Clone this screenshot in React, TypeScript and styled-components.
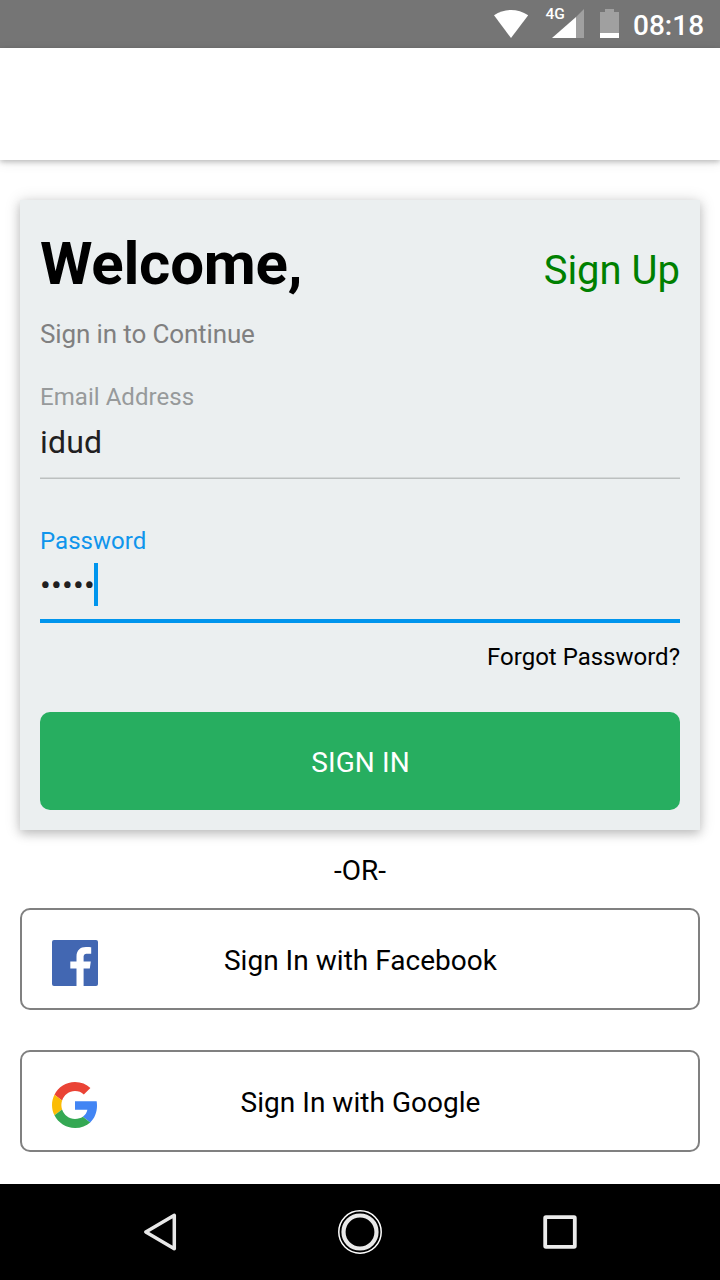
import React from 'react';
import styled, { createGlobalStyle } from 'styled-components';

const GlobalStyle = createGlobalStyle`
  * { box-sizing: border-box; }
  body {
    margin: 0;
    background: #fff;
    font-family: Roboto, 'Liberation Sans', sans-serif;
    color: #000;
  }
`;

const Screen = styled.div`
  display: flex;
  flex-direction: column;
  width: 720px;
  height: 1280px;
  overflow: hidden;
  background: #fff;
`;

const StatusBar = styled.header`
  display: flex;
  align-items: center;
  justify-content: flex-end;
  flex: none;
  height: 48px;
  padding-right: 16px;
  background: #757575;
  color: #fff;
`;

const StatusIcons = styled.svg`
  display: block;
  width: 140px;
  height: 48px;
`;

const Clock = styled.time`
  font-size: 28px;
  font-weight: 500;
  line-height: 34px;
  padding-top: 4px;
  width: 71px;
  white-space: nowrap;
`;

const AppBar = styled.div`
  flex: none;
  height: 112px;
  background: #fff;
  box-shadow: 0 2px 5px rgba(0, 0, 0, 0.22), 0 3px 12px rgba(0, 0, 0, 0.08);
`;

const Content = styled.main`
  display: flex;
  flex-direction: column;
  flex: 1;
  padding: 40px 20px 0;
`;

const Card = styled.form`
  display: flex;
  flex-direction: column;
  height: 630px;
  padding: 29px 20px 20px;
  background: #ebeff0;
  box-shadow: 0 4px 9px rgba(0, 0, 0, 0.17), 0 1px 15px rgba(0, 0, 0, 0.16);
`;

const CardHeader = styled.div`
  display: flex;
  align-items: baseline;
  justify-content: space-between;
  height: 70px;
`;

const Title = styled.h1`
  margin: 0;
  font-size: 60px;
  font-weight: 700;
  line-height: 70px;
  letter-spacing: -0.25px;
`;

const SignUpLink = styled.a`
  font-size: 40px;
  line-height: 48px;
  color: #008000;
`;

const Subtitle = styled.p`
  margin: 20px 0 34px;
  font-size: 26px;
  line-height: 30px;
  letter-spacing: -0.13px;
  color: #808080;
`;

const Field = styled.div<{ $focused?: boolean }>`
  display: flex;
  flex-direction: column;
  height: 96px;
  border-bottom: ${(p) => (p.$focused ? '4px solid #0095ed' : '1px solid #bcc0c0')};
  box-shadow: ${(p) => (p.$focused ? 'none' : 'inset 0 -1px 0 #d4d8d8')};
  & + & {
    margin-top: 48px;
  }
`;

const Label = styled.span<{ $focused?: boolean }>`
  font-size: 24px;
  line-height: 28px;
  letter-spacing: 0.05px;
  color: ${(p) => (p.$focused ? '#0f95ec' : '#979a9b')};
`;

const Value = styled.div`
  display: flex;
  align-items: center;
  height: 43px;
  margin-top: 8px;
  padding-top: 3px;
  font-size: 32px;
  line-height: 38px;
  letter-spacing: 0.15px;
  color: #1f2021;
`;

const PasswordValue = styled(Value)`
  padding-top: 0;
  letter-spacing: 0.22px;
`;

const Caret = styled.span`
  width: 4px;
  height: 43px;
  margin-left: -1px;
  background: #0095ed;
`;

const ForgotLink = styled.a`
  align-self: flex-end;
  margin-top: 20px;
  font-size: 24px;
  line-height: 28px;
`;

const SignInButton = styled.button`
  height: 98px;
  margin-top: auto;
  padding: 3px 0 0 1px;
  border: 0;
  border-radius: 10px;
  background: #27ae60;
  color: #fff;
  font: 400 28px Roboto, sans-serif;
  letter-spacing: 0.1px;
`;

const Divider = styled.p`
  margin: 25px 0 21px;
  font-size: 28px;
  line-height: 32px;
  text-align: center;
`;

const ProviderButton = styled.button`
  display: grid;
  grid-template-columns: 46px 1fr 46px;
  align-items: center;
  flex: none;
  height: 102px;
  padding: 0 30px;
  border: 2px solid #808080;
  border-radius: 10px;
  background: #fff;
  color: #000;
  font: 400 28px Roboto, sans-serif;
  & + & {
    margin-top: 40px;
  }
`;

const ProviderLabel = styled.span`
  padding: 2px 0 0 1px;
  letter-spacing: 0.03px;
`;

const ProviderLogo = styled.svg`
  display: block;
  width: 46px;
  height: 46px;
  margin-top: 8px;
`;

const NavBar = styled.nav`
  display: flex;
  align-items: center;
  justify-content: center;
  gap: 152px;
  flex: none;
  height: 96px;
  background: #000;
`;

const NavIcon = styled.svg`
  display: block;
  width: 48px;
  height: 48px;
`;

export default function App() {
  return (
    <>
      <GlobalStyle />
      <Screen>
        <StatusBar>
          <StatusIcons viewBox="493 0 140 48">
            <path d="M494 15.2C504.500 8.200 517.500 8.200 528.200 15.200L511 38Z" fill="#fff" />
            <path d="M584 9V38H576V17Z" fill="#a0a0a0" />
            <path d="M576 17V38H552Z" fill="#fff" />
            <text x="545.500" y="19.300" fontSize="15.500" fontWeight="500" fill="#fff">4G</text>
            <path d="M605 9h9v3h5v21h-19V12h5z" fill="#a0a0a0" />
            <path d="M600 33h19v5h-19z" fill="#fff" />
          </StatusIcons>
          <Clock>08:18</Clock>
        </StatusBar>
        <AppBar />
        <Content>
          <Card>
            <CardHeader>
              <Title>Welcome,</Title>
              <SignUpLink>Sign Up</SignUpLink>
            </CardHeader>
            <Subtitle>Sign in to Continue</Subtitle>
            <Field>
              <Label>Email Address</Label>
              <Value>idud</Value>
            </Field>
            <Field $focused>
              <Label $focused>Password</Label>
              <PasswordValue>
                •••••
                <Caret />
              </PasswordValue>
            </Field>
            <ForgotLink>Forgot Password?</ForgotLink>
            <SignInButton type="button">SIGN IN</SignInButton>
          </Card>
          <Divider>-OR-</Divider>
          <ProviderButton>
            <ProviderLogo viewBox="0 0 46 46">
              <rect width="46" height="46" rx="2" fill="#4267b2" />
              <path
                d="M24.500 46V28.500H18.300V21.500H24.500V16.500C24.500 10.300 28.300 7 33.900 7C36.500 7 38.500 7.200 39.200 7.300V13.700H35.300C32.200 13.700 31.600 15.200 31.600 17.300V21.500H38.800L37.800 28.500H31.600V46Z"
                fill="#fff"
              />
            </ProviderLogo>
            <ProviderLabel>Sign In with Facebook</ProviderLabel>
          </ProviderButton>
          <ProviderButton>
            <ProviderLogo viewBox="0 0 48 48">
              <path fill="#ea4335" d="M24 9.500c3.540 0 6.710 1.220 9.210 3.600l6.850-6.850C35.900 2.380 30.470 0 24 0 14.620 0 6.510 5.380 2.560 13.220l7.980 6.190C12.430 13.720 17.740 9.500 24 9.500z" />
              <path fill="#4285f4" d="M46.980 24.550c0-1.570-.150-3.090-.380-4.550H24v9.020h12.940c-.580 2.960-2.260 5.480-4.780 7.180l7.730 6c4.510-4.180 7.090-10.360 7.090-17.650z" />
              <path fill="#fbbc05" d="M10.530 28.590c-.480-1.450-.760-2.990-.760-4.590s.270-3.140.760-4.590l-7.980-6.190C.920 16.460 0 20.120 0 24c0 3.880.920 7.540 2.560 10.780l7.970-6.190z" />
              <path fill="#34a853" d="M24 48c6.480 0 11.930-2.130 15.890-5.810l-7.730-6c-2.150 1.450-4.920 2.300-8.160 2.300-6.260 0-11.570-4.220-13.470-9.910l-7.980 6.190C6.510 42.620 14.620 48 24 48z" />
            </ProviderLogo>
            <ProviderLabel>Sign In with Google</ProviderLabel>
          </ProviderButton>
        </Content>
        <NavBar>
          <NavIcon viewBox="136 1208 48 48">
            <path d="M174.300 1215.300V1248.700L145.800 1232Z" fill="none" stroke="#e8e8e8" strokeWidth="3.500" strokeLinejoin="round" />
          </NavIcon>
          <NavIcon viewBox="336 1208 48 48">
            <circle cx="360" cy="1232" r="21.200" fill="none" stroke="#fff" strokeWidth="1.500" />
            <circle cx="360" cy="1232" r="16.500" fill="none" stroke="#e8e8e8" strokeWidth="4.200" />
          </NavIcon>
          <NavIcon viewBox="536 1208 48 48">
            <rect x="545.200" y="1217.200" width="29.600" height="29.600" rx="0.800" fill="none" stroke="#ececec" strokeWidth="3.800" />
          </NavIcon>
        </NavBar>
      </Screen>
    </>
  );
}
